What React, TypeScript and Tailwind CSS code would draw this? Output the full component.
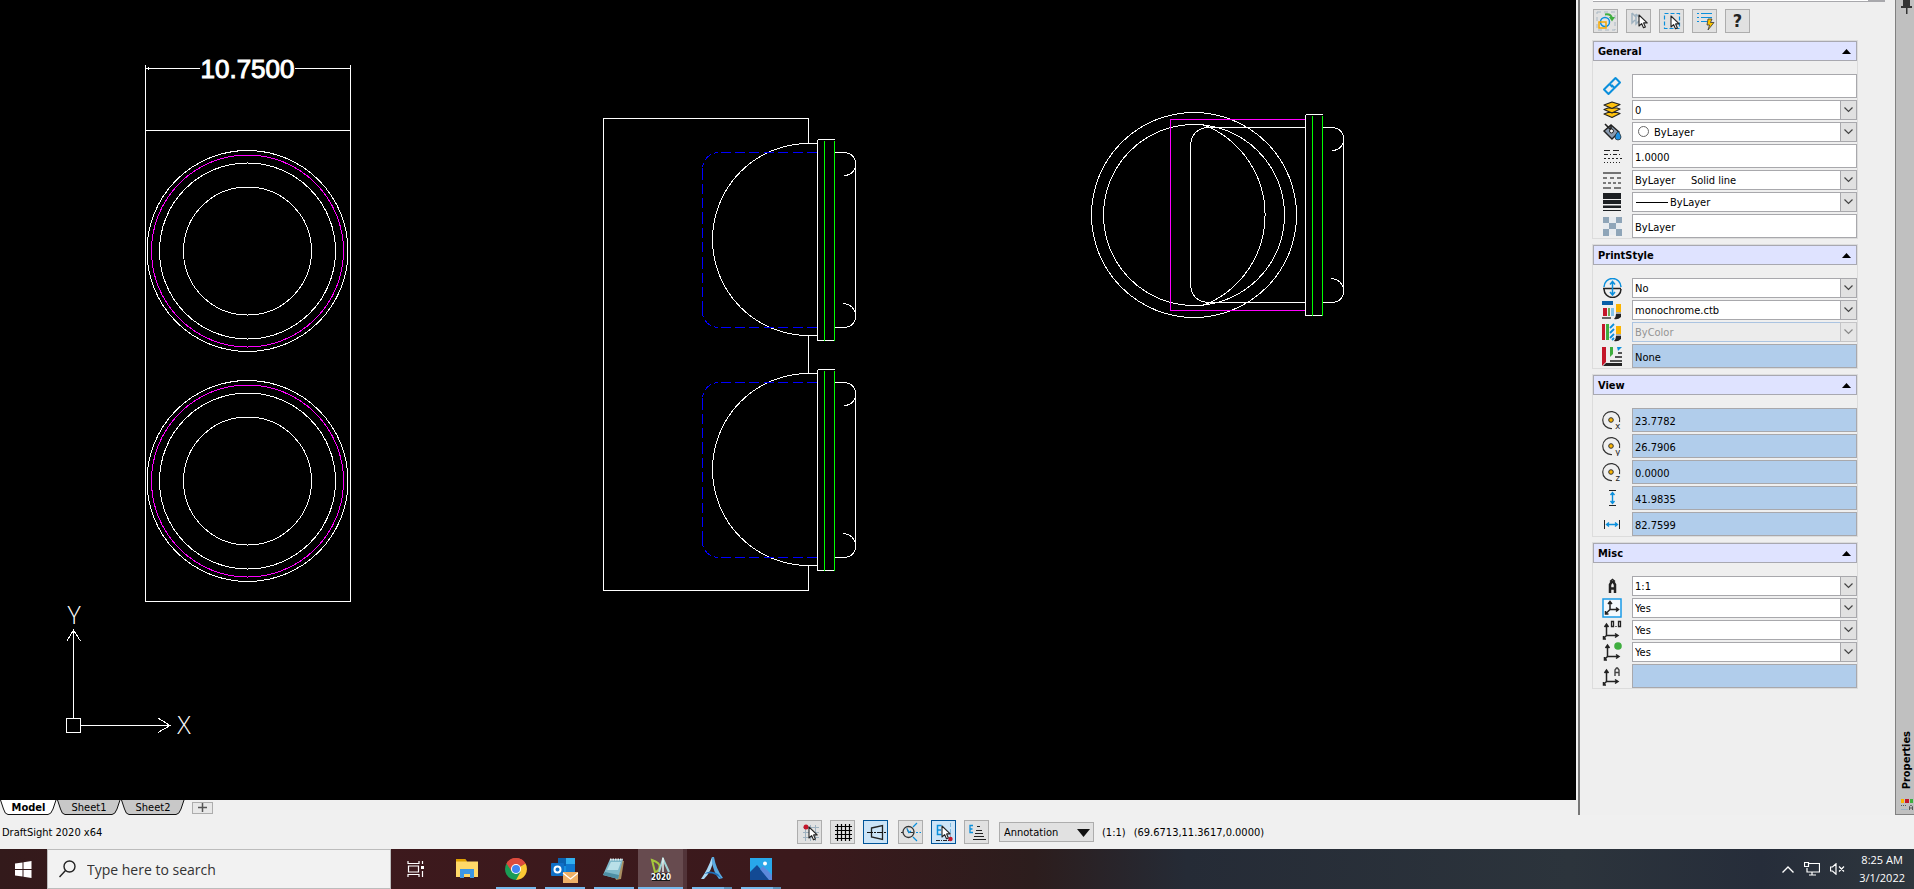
import React from "react";

type IconProps = { children: React.ReactNode; size?: number; className?: string };

function Icon({ children, size = 20, className = "" }: IconProps) {
  return (
    <svg
      width={size}
      height={size}
      viewBox={`0 0 ${size} ${size}`}
      fill="none"
      aria-hidden="true"
      className={`shrink-0 ${className}`}
    >
      {children}
    </svg>
  );
}

const Cursor = ({ x, y }: { x: number; y: number }) => (
  <path
    d={`M${x} ${y}v11l2.6-2.4 1.9 4.2 1.9-.9-1.8-4h3.6z`}
    fill="#fff"
    stroke="#222"
    strokeWidth="1.1"
    strokeLinejoin="round"
  />
);

/* ---------- Drawing ---------- */

function SignalFace({ cy }: { cy: number }) {
  return (
    <g>
      <circle cx="247.5" cy={cy} r="100.5" />
      <circle cx="247.5" cy={cy} r="96" stroke="#ff00ff" />
      <circle cx="247.5" cy={cy} r="88" />
      <circle cx="247.5" cy={cy} r="64" />
    </g>
  );
}

function Flange({ x, y }: { x: number; y: number }) {
  const b = y + 201;
  return (
    <g>
      <path d={`M${x} ${y}V${b}M${x} ${y}h17M${x} ${b}h17`} />
      <path d={`M${x + 7} ${y + 1}V${b}M${x + 17} ${y + 1}V${b}`} stroke="#00ff00" />
      <path
        d={`M${x + 17} ${y + 13}h10.5Q${x + 36} ${y + 14} ${x + 38} ${y + 22}V${b - 22}Q${x + 36} ${b - 14} ${x + 27.5} ${b - 13}h-10.5`}
      />
      <path d={`M${x + 26} ${y + 36}Q${x + 35} ${y + 36} ${x + 38} ${y + 28}`} />
      <path d={`M${x + 26} ${b - 37}Q${x + 35} ${b - 36} ${x + 38} ${b - 28}`} />
    </g>
  );
}

function SideLens({ y }: { y: number }) {
  const t = y + 13;
  const b = y + 188;
  return (
    <g>
      <path d={`M817 ${y + 4}H808.5A96 96 0 0 0 808.5 ${y + 196}H817`} />
      <path d={`M817 ${t}H718`} stroke="#0000ff" strokeDasharray="10 4.4" />
      <path d={`M817 ${b}H718`} stroke="#0000ff" strokeDasharray="10 4.4" />
      <path d={`M702.5 ${t + 15}V${b - 14}`} stroke="#0000ff" strokeDasharray="12 4 10 4.3 10 4.3" />
      <path
        d={`M718 ${t}Q705 ${t + 1} 702.5 ${t + 15}M718 ${b}Q705 ${b - 1} 702.5 ${b - 14}`}
        stroke="#0000ff"
        strokeDasharray="4 3 9 3"
      />
      <Flange x={817.5} y={y} />
    </g>
  );
}

function Drawing() {
  return (
    <svg
      width="1400"
      height="780"
      viewBox="0 0 1400 780"
      fill="none"
      stroke="#fff"
      strokeWidth="1"
      shapeRendering="crispEdges"
      className="block shrink-0"
      role="img"
      aria-label="Traffic signal housing, front and side views"
    >
      <path d="M145.5 65V601.5H350.5V65M145.5 130.5H350.5M146 68.5H200M295 68.5H350M148.500 67v3" />
      <text
        x="247.5"
        y="78"
        textAnchor="middle"
        fontSize="26"
        fontFamily="'Liberation Sans', Arial, sans-serif"
        fill="#fff"
        strokeWidth="1"
      >
        10.7500
      </text>
      <SignalFace cy={251} />
      <SignalFace cy={481} />

      <path d="M808.5 144V118.500H603.5V590.5H808.5V566M808.5 336V374" />
      <SideLens y={139.5} />
      <SideLens y={369.5} />

      <circle cx="1194" cy="215" r="102.5" />
      <circle cx="1194" cy="215" r="90.5" />
      <path d="M1305 119.500H1170.500V310.500H1305" stroke="#ff00ff" />
      <path d="M1305 127.500H1207.500Q1192 129 1190.500 145V285Q1192 301 1207.500 302.500H1305" />
      <path d="M1203 124.500A97 97 0 0 1 1203 305.500" />
      <Flange x={1305.5} y={114.5} />

      <rect x="66.5" y="718.5" width="14" height="14" />
      <path d="M81 725.5H170M158 718l12 7.500-12 7M73.500 718V630M67 641l6.500-11 7 11" />
      <g
        fill="#fff"
        stroke="none"
        fontSize="25"
        textAnchor="middle"
        fontWeight="300"
        fontFamily="'Open Sans', Lato, sans-serif"
      >
        <text x="184" y="734">X</text>
        <text x="74" y="624">Y</text>
      </g>
    </svg>
  );
}

/* ---------- Property icons ---------- */

const LinkIcon = () => (
  <Icon>
    <g stroke="#0a8fdc" strokeWidth="2" strokeLinejoin="round">
      <path d="M8 7.500L13.500 2l4.500 4.500L12.500 12 9.500 9" />
      <path d="M12 12.500L6.500 18 2 13.500 7.500 8l3 3" />
    </g>
  </Icon>
);
const LayersIcon = () => (
  <Icon>
    <g fill="#ffc20e" stroke="#222" strokeWidth="1.2" strokeLinejoin="round">
      <path d="M2 14l4-1.500h9l3 1-8 4z" />
      <path d="M2 9.500L6 8h9l3 1-8 4z" />
      <path d="M2 5l8-3 8 2.500-8 4z" />
    </g>
  </Icon>
);
const BucketIcon = () => (
  <Icon>
    <path d="M2 9l7-6 8 7-7 7z" fill="#8a9bb0" stroke="#222" strokeWidth="1.4" />
    <path d="M3 2l6 6M9 3v6" stroke="#222" strokeWidth="1.6" />
    <circle cx="9.500" cy="9" r="2" fill="#fff" stroke="#222" />
    <path d="M16 9q3 4 3 6a3 3 0 0 1-6 0q0-2 3-6z" fill="#1e90e0" stroke="#222" strokeWidth=".7" />
  </Icon>
);
const LineScaleIcon = () => (
  <Icon>
    <g stroke="#222">
      <path d="M2 4.500h18" strokeDasharray="6 3" />
      <path d="M2 8.500h18" strokeDasharray="4 2 1 2" />
      <path d="M2 12.500h18" strokeDasharray="2 2" />
      <path d="M2 16.500h18" strokeDasharray="1 2" />
    </g>
  </Icon>
);
const LineStyleIcon = () => (
  <Icon>
    <g stroke="#555" strokeWidth="1.600">
      <path d="M1 3h18" />
      <path d="M1 8h18" strokeDasharray="4 3" />
      <path d="M1 13h18" strokeDasharray="3 2" />
      <path d="M1 18h18" strokeDasharray="8 3" />
    </g>
  </Icon>
);
const LineWeightIcon = () => (
  <Icon>
    <path d="M1 1h18v6H1zM1 8h18v4H1zM1 13.500h18v2.500H1zM1 18h18v1H1z" fill="#1c1f22" />
  </Icon>
);
const TransparencyIcon = () => (
  <Icon>
    <path d="M1 1h18v18H1z" fill="#e7ebef" />
    <path d="M1 1h6v6H1zM14 1h6v6h-6zM7 7h7v6H7zM1 13h6v7H1zM14 13h6v7h-6z" fill="#8fa5b8" />
  </Icon>
);
const PrintScaleIcon = () => (
  <Icon>
    <path d="M2 9a8 8 0 0 1 17 0" stroke="#0a8fdc" strokeWidth="1.500" />
    <path d="M2 11a8 8 0 0 0 17 0M1 10.500h18" stroke="#222" strokeWidth="1.500" />
    <path d="M10.500 4v12M8 6.500l2.500-3 2.500 3M8 14l2.500 3 2.500-3" stroke="#0a8fdc" strokeWidth="1.500" />
  </Icon>
);
const Brush = () => (
  <g>
    <path d="M14 4h5v8h-5z" fill="#fbb400" />
    <path d="M14 12h5v2h-5z" fill="#aaa" />
    <path d="M14 14h5v3q-3 3-7 2 2-2 2-5z" fill="#222" />
  </g>
);
const PrintTableIcon = () => (
  <Icon>
    <path d="M0 1h11v4H0z" fill="#0b5fa8" />
    <path d="M1 8h4v8H1z" fill="#c4162a" />
    <path d="M6 8h2v8H6z" fill="#6aa84f" />
    <path d="M9 8h3v8H9z" fill="#83c3ea" />
    <path d="M0 17h9v2H0z" fill="#666" />
    <Brush />
  </Icon>
);
const PrintColorIcon = () => (
  <Icon>
    <path d="M0 2h3v16H0z" fill="#c4162a" />
    <path d="M4 2h3v16H4z" fill="#3fae3f" />
    <path d="M8 6l4-4M8 11l4-4M8 16l4-4M10 18l2-2" stroke="#0a8fdc" strokeWidth="1.800" />
    <Brush />
  </Icon>
);
const PrintNoneIcon = () => (
  <Icon>
    <path d="M0 1h4v15l-4 4z" fill="#c4162a" />
    <path d="M8 1h3v7l-3 3z" fill="#3fae3f" />
    <path d="M15 1h5l-4 4z" fill="#0a8fdc" />
    <path d="M16 7h4M13 11h7M8 15h12" stroke="#222" strokeWidth="1.500" />
    <path d="M4 17h16v3H1z" fill="#222" />
  </Icon>
);
const CenterIcon = ({ axis }: { axis: string }) => (
  <Icon>
    <path d="M10 18.500A8.500 8.500 0 1 1 17.500 12" stroke="#333" strokeWidth="1.200" />
    <circle cx="9" cy="10" r="2.300" fill="#fbb400" stroke="#333" />
    <text x="13" y="19" fontSize="9" fontFamily="'DejaVu Sans Mono', monospace" fill="#222">
      {axis}
    </text>
  </Icon>
);
const HeightIcon = () => (
  <Icon>
    <path d="M7 2.500h7M7 17.500h7" stroke="#222" />
    <path d="M10.500 5v10M8.500 7l2-2.500 2 2.500M8.500 13l2 2.500 2-2.500" stroke="#0a8fdc" strokeWidth="1.400" />
  </Icon>
);
const WidthIcon = () => (
  <Icon>
    <path d="M2.500 6v9M17.500 6v9" stroke="#222" />
    <path d="M5 10.500h10M7 8.500l-2.500 2 2.500 2M13 8.500l2.500 2-2.500 2" stroke="#0a8fdc" strokeWidth="1.400" />
  </Icon>
);
const AnnotationScaleIcon = () => (
  <Icon>
    <path d="M8 17V8.500L9.500 6h2L13 8.500V17M8 12.500h5" stroke="#222" strokeWidth="2.500" />
    <path d="M8 5.500l2.500-2 2.500 2" stroke="#222" strokeWidth="1.500" />
  </Icon>
);
const Axes = ({ x, y }: { x: number; y: number }) => (
  <path
    d={`M${x} ${y}v-11m-2 2.500l2-3 2 3M${x} ${y}h11m-2.500-2l3 2-3 2M${x} ${y}l-3 3m0-2.500v3h2.500`}
    stroke="#222"
    strokeWidth="1.500"
  />
);
const CcsIcon = () => (
  <Icon>
    <rect x="1" y="1" width="18" height="18" fill="#f4f9fd" stroke="#1a9be8" strokeWidth="1.500" />
    <path
      d="M8 11.500V4m-2 2l2-2.500 2 2.500M8 11.500h8m-2-2l2.500 2-2.500 2M8 11.500L4 15.500m-.5-2.500v3h3"
      stroke="#222"
      strokeWidth="1.500"
    />
  </Icon>
);
const CcsOriginIcon = () => (
  <Icon>
    <Axes x={4.5} y={15.5} />
    <path d="M9.500 1.500h2v5h-2zM16.500 1.500h2v5h-2zM14 6v1" stroke="#222" strokeWidth="1.300" />
  </Icon>
);
const CcsViewIcon = () => (
  <Icon>
    <Axes x={5.5} y={14.5} />
    <circle cx="16" cy="4" r="3.800" fill="#3fae3f" />
  </Icon>
);
const CcsNameIcon = () => (
  <Icon>
    <Axes x={4.5} y={15.5} />
    <path d="M13 10V4l1.500-2h1L17 4v6M13 6.500h4" stroke="#444" strokeWidth="1.400" />
  </Icon>
);

/* ---------- Property panel ---------- */

const Chevron = () => (
  <span className="pointer-events-none absolute inset-y-0 right-0 flex w-[17px] items-center justify-center border border-[#a8a8ac] bg-[#e1e1e1]">
    <svg width="9" height="6" viewBox="0 0 9 6" fill="none" stroke="#444" strokeWidth="1.200" aria-hidden="true">
      <path d="M.5.5l4 4 4-4" />
    </svg>
  </span>
);

type RowProps = {
  icon: React.ReactNode;
  label: string;
  value: string;
  kind?: "select" | "text" | "readonly";
  disabled?: boolean;
  pad?: string;
  adornment?: React.ReactNode;
};

function Row({ icon, label, value, kind = "select", disabled, pad = "pl-[2px]", adornment }: RowProps) {
  return (
    <div className="flex items-center pl-[9px]">
      {icon}
      {kind === "select" ? (
        <span className={`relative ml-[10px] flex h-[20px] flex-1 ${disabled ? "opacity-60" : ""}`}>
          <select
            aria-label={label}
            disabled={disabled}
            defaultValue={value}
            className={`w-full appearance-none rounded-none border pt-[2px] whitespace-pre ${pad} ${
              disabled ? "border-[#7fa8d8] bg-[#ebebeb] text-[#555]" : "border-[#a8a8ac] bg-white text-black"
            }`}
          >
            <option>{value}</option>
          </select>
          {adornment}
          <Chevron />
        </span>
      ) : (
        <input
          type="text"
          aria-label={label}
          defaultValue={value}
          readOnly={kind === "readonly"}
          className={`ml-[10px] h-[24px] w-0 flex-1 border border-[#a8a8ac] pt-[2px] pl-[2px] text-black ${
            kind === "readonly" ? "bg-[#b1cdeb]" : "bg-white"
          }`}
        />
      )}
    </div>
  );
}

function Section({ title, children }: { title: string; children: React.ReactNode }) {
  return (
    <section className="ring-1 ring-[#dcdcdc]">
      <button
        type="button"
        className="flex h-[20px] w-full items-center justify-between border border-[#a8a8b0] bg-[#dfe3ff] pr-[5px] pl-[4px] font-bold"
      >
        <span className="pt-[2px]">{title}</span>
        <svg width="9" height="5" viewBox="0 0 9 5" aria-hidden="true">
          <path d="M0 5L4.500 0 9 5z" />
        </svg>
      </button>
      <div className="flex flex-col gap-[2px] pt-[13px]">{children}</div>
    </section>
  );
}

function ToolButton({ label, active, children }: { label: string; active?: boolean; children: React.ReactNode }) {
  return (
    <button
      type="button"
      aria-label={label}
      className={`flex h-[24px] w-[25px] items-center justify-center border ${
        active ? "border-[#005499] bg-[#cce4f7]" : "border-[#adadad] bg-[#e1e1e1]"
      }`}
    >
      {children}
    </button>
  );
}

function PropertiesPanel() {
  return (
    <aside className="flex w-[336px] shrink-0 border-l-2 border-[#777] bg-[#efefef]">
      <div className="min-w-0 flex-1 pl-[13px]">
        <div className="mr-[10px] flex h-[2px] border-b border-[#a8a8ac] bg-white">
          <div className="ml-auto w-[17px] bg-[#a8a8ac]" />
        </div>
        <div className="flex gap-[8px] py-[7px]">
          <ToolButton label="Smart select">
            <Icon>
              <rect x="1" y="1" width="18" height="18" stroke="#a9b8c4" strokeDasharray="4 3" />
              <circle cx="9" cy="11" r="4.500" stroke="#0a8fdc" strokeWidth="1.500" />
              <rect x="3" y="11" width="7" height="6" stroke="#f5a800" strokeWidth="1.500" />
              <path d="M9 3.500q6-1 7 4" stroke="#3fae3f" strokeWidth="2" />
              <path d="M13 6h6l-3 4.500z" fill="#3fae3f" />
            </Icon>
          </ToolButton>
          <ToolButton label="Select matching">
            <Icon>
              <path d="M3 2v10l3-3M3 2l4 4M7 3v10l3-3M7 3l4 4" stroke="#9fb2c0" strokeWidth="1.500" />
              <Cursor x={10} y={4} />
            </Icon>
          </ToolButton>
          <ToolButton label="Select entities">
            <Icon>
              <rect x="2.500" y="2.500" width="15" height="15" stroke="#0a8fdc" strokeWidth="1.200" strokeDasharray="4 2" />
              <Cursor x={9} y={5} />
            </Icon>
          </ToolButton>
          <ToolButton label="Quick properties">
            <Icon>
              <path d="M2 2.500h2M6 2.500h11M2 6.500h2M6 6.500h11M2 10.500h2M6 10.500h6" stroke="#0a8fdc" />
              <path d="M13 8h4l-1.500 3.500H19L13 19l1.500-5H12z" fill="#fbc400" stroke="#333" strokeWidth=".8" />
            </Icon>
          </ToolButton>
          <ToolButton label="Help">
            <span className="text-[18px] leading-[20px] font-bold text-[#222]">?</span>
          </ToolButton>
        </div>
        <div className="mt-px mr-[38px] flex flex-col gap-[7px]">
          <Section title="General">
            <Row icon={<LinkIcon />} label="Hyperlink" value="" kind="text" />
            <Row icon={<LayersIcon />} label="Layer" value="0" />
            <Row
              icon={<BucketIcon />}
              label="Line color"
              value="ByLayer"
              pad="pl-[21px]"
              adornment={
                <span className="pointer-events-none absolute top-[4px] left-[6px] size-[11px] rounded-full border border-[#666]" />
              }
            />
            <Row icon={<LineScaleIcon />} label="Line scale" value="1.0000" kind="text" />
            <Row icon={<LineStyleIcon />} label="Line style" value={"ByLayer\u00a0\u00a0\u00a0\u00a0\u00a0Solid line"} />
            <Row
              icon={<LineWeightIcon />}
              label="Line weight"
              value="ByLayer"
              pad="pl-[37px]"
              adornment={<span className="pointer-events-none absolute top-[10px] left-[4px] h-px w-[32px] bg-black" />}
            />
            <Row icon={<TransparencyIcon />} label="Transparency" value="ByLayer" kind="text" />
          </Section>
          <Section title="PrintStyle">
            <Row icon={<PrintScaleIcon />} label="Print" value="No" />
            <Row icon={<PrintTableIcon />} label="Print style table" value="monochrome.ctb" />
            <Row icon={<PrintColorIcon />} label="Print style" value="ByColor" disabled />
            <Row icon={<PrintNoneIcon />} label="Attached to" value="None" kind="readonly" />
          </Section>
          <Section title="View">
            <Row icon={<CenterIcon axis="x" />} label="Center X" value="23.7782" kind="readonly" />
            <Row icon={<CenterIcon axis="y" />} label="Center Y" value="26.7906" kind="readonly" />
            <Row icon={<CenterIcon axis="z" />} label="Center Z" value="0.0000" kind="readonly" />
            <Row icon={<HeightIcon />} label="Height" value="41.9835" kind="readonly" />
            <Row icon={<WidthIcon />} label="Width" value="82.7599" kind="readonly" />
          </Section>
          <Section title="Misc">
            <Row icon={<AnnotationScaleIcon />} label="Annotation scale" value="1:1" />
            <Row icon={<CcsIcon />} label="Show icon" value="Yes" />
            <Row icon={<CcsOriginIcon />} label="Icon at origin" value="Yes" />
            <Row icon={<CcsViewIcon />} label="Per view" value="Yes" />
            <Row icon={<CcsNameIcon />} label="CCS name" value="" kind="readonly" />
          </Section>
        </div>
      </div>
      <div className="flex w-[19px] flex-col items-center justify-between border-b border-l border-[#808080] bg-[#c0c0c0] pb-[3px]">
        <svg width="11" height="14" viewBox="0 0 11 14" aria-hidden="true" className="ml-[3px]">
          <path d="M2 0h7v6h2v2H0V6h2zM5 8h1.500v6H5z" fill="#333" />
        </svg>
        <div className="flex flex-col items-center gap-[9px] pl-[4px]">
          <span className="rotate-180 text-[11px] leading-[14px] font-bold [writing-mode:vertical-rl]">Properties</span>
          <svg width="14" height="13" viewBox="0 0 14 13" fill="none" aria-hidden="true">
            <path d="M1 1h3v4H1z" fill="#fbb400" />
            <path d="M5 1h4v4H5z" fill="#c4162a" />
            <path d="M10 1h3v4h-3z" fill="#3fae3f" />
            <path d="M1 7.500h6" stroke="#555" strokeDasharray="1 1" />
            <path d="M1 11.500h7" stroke="#9fb2c0" />
            <path d="M9.500 12V8.500l1-1h1l1 1V12M9.500 10h3" stroke="#555" />
          </svg>
        </div>
      </div>
    </aside>
  );
}

/* ---------- Sheet tabs and status bar ---------- */

function SheetTab({ label, active, width }: { label: string; active?: boolean; width: number }) {
  return (
    <button type="button" className="relative h-[15px]" style={{ width }}>
      <svg
        width={width}
        height="15"
        viewBox={`0 0 ${width} 15`}
        aria-hidden="true"
        className="absolute inset-0 overflow-visible"
      >
        <path
          d={`M.5 0L3.500 9Q5 14.500 8 14.500H${width - 9}Q${width - 6} 14.500 ${width - 4} 9L${width - 1} 0`}
          fill={active ? "#fff" : "#c8c8c8"}
          stroke="#111"
        />
      </svg>
      <span className={`relative block pt-px leading-[14px] ${active ? "font-bold" : "font-normal"}`}>{label}</span>
    </button>
  );
}

function StatusBar() {
  return (
    <footer className="grid h-[34px] grid-cols-[797px_1fr] items-center bg-[#f0f0f0]">
      <span className="pt-[2px] pl-[2px]">DraftSight 2020 x64</span>
      <div className="flex items-center gap-[10px]">
        <div className="flex gap-[8px]">
          <ToolButton label="Snap">
            <Icon>
              <path d="M3 5.500h16M3 10.500h16M3 15.500h16M5.500 3v16M10.500 3v16M15.500 3v16" stroke="#9fb2c0" />
              <circle cx="6" cy="5" r="2.500" fill="#c4162a" />
              <Cursor x={9} y={5} />
            </Icon>
          </ToolButton>
          <ToolButton label="Grid">
            <Icon>
              <path
                d="M2 4.500h17M2 8.500h17M2 12.500h17M2 16.500h17M4.500 2v17M8.500 2v17M12.500 2v17M16.500 2v17"
                stroke="#000"
                strokeWidth="1.200"
              />
            </Icon>
          </ToolButton>
          <ToolButton label="Ortho" active>
            <Icon>
              <path d="M5.500 6L16.500 3.500v14L5.500 15z" stroke="#222" strokeWidth="1.300" />
              <path d="M1 10.500h19" stroke="#111" strokeDasharray="6 1 2 1" />
            </Icon>
          </ToolButton>
        </div>
        <div className="flex gap-[8px]">
          <ToolButton label="Polar">
            <Icon>
              <circle cx="7.500" cy="10" r="5.500" stroke="#333" strokeWidth="1.300" />
              <path d="M0 10.500h2M6 6.500l1.500 4h5" stroke="#333" />
              <path
                d="M6 6.500l2 4 2-1.500M12 5l4-4M15 10.500h2M18.500 10.500h1.500M12 15l4 4"
                stroke="#0a8fdc"
                strokeWidth="1.200"
              />
            </Icon>
          </ToolButton>
          <ToolButton label="Entity snap" active>
            <Icon>
              <path d="M7.500 3.500h-4v9h4M3.500 8h3.500" stroke="#0a8fdc" strokeWidth="1.500" />
              <path d="M2 18.500h14" stroke="#222" strokeDasharray="4 1 1 1" />
              <path d="M16.500 1v14" stroke="#7cb9de" strokeDasharray="4 2" />
              <Cursor x={8} y={4} />
              <circle cx="16.500" cy="17" r="2.200" fill="#c4162a" />
            </Icon>
          </ToolButton>
          <ToolButton label="Entity track">
            <Icon>
              <path d="M6 3.500H3v7h3M3 7h2.500" stroke="#0a8fdc" strokeWidth="1.300" />
              <path d="M10 4.500h3M9 8.500h6M8 11.500h8M7 14.500h10M6 17.500h13" stroke="#222" strokeWidth="1.200" />
            </Icon>
          </ToolButton>
        </div>
        <div className="flex items-center gap-[8px]">
          <span className="relative flex">
            <select
              aria-label="Workspace"
              className="h-[20px] w-[95px] appearance-none rounded-none border border-[#adadad] bg-[#e1e1e1] pt-[2px] pl-[4px]"
            >
              <option>Annotation</option>
            </select>
            <svg
              width="13"
              height="8"
              viewBox="0 0 13 8"
              aria-hidden="true"
              className="pointer-events-none absolute top-[7px] right-[4px]"
            >
              <path d="M0 0h13L6.500 8z" fill="#111" />
            </svg>
          </span>
          <span className="pt-[2px]">(1:1)</span>
          <span className="pt-[2px]">(69.6713,11.3617,0.0000)</span>
        </div>
      </div>
    </footer>
  );
}

/* ---------- Taskbar ---------- */

function TaskButton({
  label,
  state = "idle",
  children,
}: {
  label: string;
  state?: "idle" | "open" | "stacked" | "active";
  children: React.ReactNode;
}) {
  return (
    <button
      type="button"
      aria-label={label}
      className={`flex h-[40px] w-[49px] flex-col items-center justify-between ${
        state === "active" ? "border-r-4 border-[#523439] bg-[#674b4f]" : ""
      }`}
    >
      <span className="flex h-[38px] items-center pt-px">{children}</span>
      {state !== "idle" && (
        <span className={`flex h-[2px] bg-[#76b9ed] ${state === "active" ? "w-full" : "w-[40px]"}`}>
          {state === "stacked" && <span className="ml-auto w-[8px] bg-[#5a8fb8]" />}
        </span>
      )}
    </button>
  );
}

function Taskbar() {
  return (
    <nav className="flex h-[40px] items-center bg-[linear-gradient(90deg,#331a1b_0%,#3d191d_15%,#3b191c_42%,#2c1d1d_54%,#252b36_62%,#2c343c_82%,#262d3a_92%,#2e363d_100%)] font-['Open_Sans','Noto_Sans',sans-serif]">
      <button type="button" aria-label="Start" className="flex h-full w-[47px] items-center justify-center">
        <svg width="17" height="17" viewBox="0 0 17 17" fill="#fff" aria-hidden="true">
          <path d="M0 2.500L7.500 1.400V8H0zM8.500 1.200L16.500 0v8h-8zM0 9h7.500v6.600L0 14.500zM8.500 9h8v8l-8-1.200z" />
        </svg>
      </button>
      <div className="flex h-full w-[344px] items-center gap-[11px] border border-[#bcbcbc] bg-[#f2f2f2] pl-[11px]">
        <svg width="17" height="18" viewBox="0 0 17 18" fill="none" stroke="#222" strokeWidth="1.400" aria-hidden="true">
          <circle cx="10.500" cy="6.500" r="5.500" />
          <path d="M6.500 10.500L.5 17" />
        </svg>
        <input
          type="text"
          aria-label="Search"
          placeholder="Type here to search"
          className="w-0 flex-1 bg-transparent pt-[2px] text-[14px] leading-[20px] placeholder:text-[#333]"
        />
      </div>
      <TaskButton label="Task view">
        <svg width="18" height="16" viewBox="0 0 18 16" fill="none" stroke="#fff" strokeWidth="1.200" aria-hidden="true">
          <path d="M1 0v2.500h11V0M1 16v-2.500h11V16M1.500 5h10v6h-10zM15.500 0v3M15.500 10v6" />
          <path d="M14 5h3v3h-3z" fill="#fff" stroke="none" />
        </svg>
      </TaskButton>
      <div className="flex pl-[2px]">
        <TaskButton label="File Explorer">
          <svg width="22" height="19" viewBox="0 0 22 19" aria-hidden="true">
            <path d="M0 0h9l2 2.500h11V18H0z" fill="#ffd868" />
            <path d="M0 0h9l2 2.500H0z" fill="#e0a000" />
            <path d="M4 10h14v9h-4v-4H8v4H4z" fill="#3b96e4" />
          </svg>
        </TaskButton>
        <TaskButton label="Google Chrome" state="open">
          <svg width="22" height="22" viewBox="0 0 22 22" aria-hidden="true">
            <path d="M11 11L1.500 5.500A11 11 0 0 1 20.500 5.500z" fill="#dd4b3e" />
            <path d="M11 11L20.500 5.500A11 11 0 0 1 11 22z" fill="#fcc934" />
            <path d="M11 11l4.500 3L11 22A11 11 0 0 1 1.500 5.500z" fill="#1a9c55" />
            <path d="M11 6h9.700A11 11 0 0 0 1.500 5.500L6.700 13.500z" fill="#dd4b3e" />
            <circle cx="11" cy="11" r="5" fill="#fff" />
            <circle cx="11" cy="11" r="4" fill="#4285f4" />
          </svg>
        </TaskButton>
        <TaskButton label="Outlook" state="open">
          <svg width="27" height="26" viewBox="0 0 27 26" aria-hidden="true" className="mt-[4px]">
            <path d="M7 0h17v17H7z" fill="#1490df" />
            <path d="M7 0h8v8H7z" fill="#0a62b0" />
            <path d="M15 0h9v6h-9z" fill="#32b0f0" />
            <path d="M15 6h9v8h-9z" fill="#0f78cf" />
            <rect y="5" width="13" height="13" rx="1" fill="#0f6fc6" />
            <circle cx="6.500" cy="11.500" r="3" fill="none" stroke="#fff" strokeWidth="2" />
            <path d="M12 14h15v11H12z" fill="#eeb066" />
            <path d="M12 15l7.500 6 7.500-6" fill="none" stroke="#fff" strokeWidth="1.300" />
          </svg>
        </TaskButton>
        <TaskButton label="Notepad" state="open">
          <svg width="23" height="22" viewBox="0 0 23 22" aria-hidden="true">
            <path d="M8 2l14 1-3 18-5 1z" fill="#a98f62" />
            <path d="M8 1h13l-5 20L1 17z" fill="#7fb9ca" />
            <path d="M9 4h10l-3 8H5z" fill="#b9e0e8" />
            <path d="M3 14l-2 3 15 4 1-4z" fill="#4e8fa5" />
            <path d="M8 1.500h13" stroke="#e8edf0" strokeWidth="2" strokeDasharray="1.500 1" />
          </svg>
        </TaskButton>
        <TaskButton label="DraftSight 2020" state="active">
          <svg width="24" height="24" viewBox="0 0 24 24" fill="none" aria-hidden="true">
            <path d="M3 3q9 3 7.500 7.500T6 15z" stroke="#a5c63b" strokeWidth="2" />
            <path d="M10 15L14 2l6 13" stroke="#9fd3d6" strokeWidth="2" />
            <path d="M14 1v14" stroke="#e8f0f0" strokeWidth="1.500" />
            <path d="M3 16h18v8H3z" fill="#151515" />
            <text
              x="12"
              y="23"
              fontSize="8"
              fontWeight="700"
              textAnchor="middle"
              fill="#fff"
              fontFamily="'DejaVu Sans Condensed', sans-serif"
            >
              2020
            </text>
          </svg>
        </TaskButton>
        <TaskButton label="ARES" state="stacked">
          <svg width="24" height="23" viewBox="0 0 24 23" fill="none" aria-hidden="true">
            <path d="M1 22Q8 12 12 0l2 1q-2 13-10 21z" fill="#a9d8f5" />
            <path d="M12 0h2q2 12 9 21l-4 1Q13 14 12 5z" fill="#5aa9e0" />
            <path d="M4 17Q10 12 18 17l4 5Q13 14 4 17z" fill="#1e6fb8" />
          </svg>
        </TaskButton>
        <TaskButton label="Photos" state="stacked">
          <svg width="22" height="22" viewBox="0 0 22 22" aria-hidden="true">
            <path d="M0 0h22v22H0z" fill="#28a8ea" />
            <path d="M9 22l7-11 6 7v4z" fill="#6b8fe6" />
            <path d="M0 14l7-7 13 15H0z" fill="#134a94" />
            <path d="M10 11l3-3 9 9v5h-3z" fill="#5c89dc" />
            <circle cx="15" cy="5.500" r="2" fill="#fff" />
          </svg>
        </TaskButton>
      </div>
      <div className="ml-auto flex items-center gap-[10px] pr-[9px] text-white">
        <svg width="12" height="7" viewBox="0 0 12 7" fill="none" stroke="#fff" strokeWidth="1.400" aria-hidden="true">
          <path d="M.5 6.500l5.500-5.500 5.500 5.500" />
        </svg>
        <svg width="16" height="14" viewBox="0 0 16 14" fill="none" stroke="#fff" strokeWidth="1.200" aria-hidden="true">
          <path d="M5 1.500h10.500v8.500H3V6M.5.5h4v4h-4zM8 10v3M5 13h7" />
        </svg>
        <svg width="15" height="12" viewBox="0 0 15 12" fill="none" stroke="#fff" strokeWidth="1.200" aria-hidden="true">
          <path d="M.5 4h2L6 .8v10.400L2.500 8h-2zM9 3.500l5 5M14 3.500l-5 5" />
        </svg>
        <div className="ml-[4px] text-center text-[11px] leading-[18px]">
          <div>8:25 AM</div>
          <div>3/1/2022</div>
        </div>
      </div>
    </nav>
  );
}

export default function App() {
  return (
    <div className="flex min-h-screen flex-col overflow-hidden bg-[#f0f0f0] font-['DejaVu_Sans_Condensed','Noto_Sans',sans-serif] text-[11px] leading-[14px] text-black">
      <main className="flex flex-1">
        <div className="flex min-w-0 flex-1 flex-col">
          <div className="mr-[2px] flex-1 overflow-hidden bg-black">
            <Drawing />
          </div>
          <div className="flex h-[15px] items-center">
            <SheetTab label="Model" active width={57} />
            <SheetTab label="Sheet1" width={64} />
            <SheetTab label="Sheet2" width={64} />
            <button
              type="button"
              aria-label="Add sheet"
              className="ml-[7px] flex h-[12px] w-[21px] items-center justify-center border border-[#adadad] bg-[#e8e8e8]"
            >
              <svg width="9" height="9" viewBox="0 0 9 9" stroke="#555" strokeWidth="1.500" aria-hidden="true">
                <path d="M4.500 0v9M0 4.500h9" />
              </svg>
            </button>
          </div>
        </div>
        <PropertiesPanel />
      </main>
      <StatusBar />
      <Taskbar />
    </div>
  );
}
